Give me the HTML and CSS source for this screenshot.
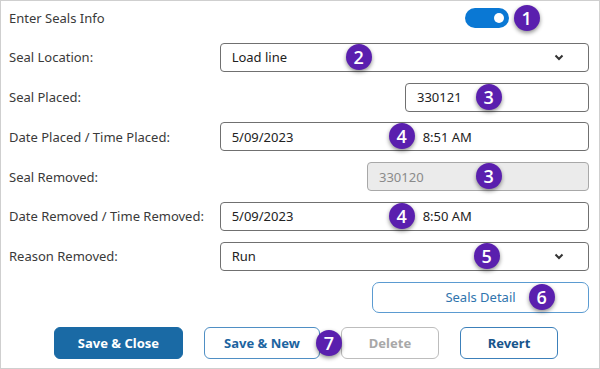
FILE: index.html
```html
<!DOCTYPE html>
<html lang="en">
<head>
  <meta charset="UTF-8">
  <meta name="viewport" content="width=device-width, initial-scale=1.0">
  <title>Enter Seals Info</title>
  <link rel="stylesheet" href="styles.css">
</head>
<body>
<div class="panel">
  <div class="row">
    <span class="label">Enter Seals Info</span>
    <div class="field end toggle-field">
      <div class="toggle"><span class="knob"></span></div>
      <span class="badge b-toggle">1</span>
    </div>
  </div>

  <div class="row">
    <span class="label">Seal Location:</span>
    <div class="field">
      <div class="box select">
        <span>Load line</span>
        <svg class="chev" width="10" height="7" viewBox="0 0 10 7"><polyline points="1.5,1.5 5,5 8.5,1.5" fill="none" stroke="#333" stroke-width="2"/></svg>
      </div>
      <span class="badge b-loc">2</span>
    </div>
  </div>

  <div class="row">
    <span class="label">Seal Placed:</span>
    <div class="field end">
      <div class="box placed">330121</div>
      <span class="badge b-seal">3</span>
    </div>
  </div>

  <div class="row">
    <span class="label">Date Placed / Time Placed:</span>
    <div class="field">
      <div class="box datetime">
        <span class="date">5/09/2023</span>
        <span>8:51 AM</span>
      </div>
      <span class="badge b-date">4</span>
    </div>
  </div>

  <div class="row">
    <span class="label">Seal Removed:</span>
    <div class="field end">
      <div class="box removed">330120</div>
      <span class="badge b-seal">3</span>
    </div>
  </div>

  <div class="row">
    <span class="label">Date Removed / Time Removed:</span>
    <div class="field">
      <div class="box datetime">
        <span class="date">5/09/2023</span>
        <span>8:50 AM</span>
      </div>
      <span class="badge b-date">4</span>
    </div>
  </div>

  <div class="row">
    <span class="label">Reason Removed:</span>
    <div class="field">
      <div class="box select">
        <span>Run</span>
        <svg class="chev" width="10" height="7" viewBox="0 0 10 7"><polyline points="1.5,1.5 5,5 8.5,1.5" fill="none" stroke="#333" stroke-width="2"/></svg>
      </div>
      <span class="badge b-reason">5</span>
    </div>
  </div>

  <div class="row detail-row">
    <span class="label"></span>
    <div class="field end">
      <button class="detail">Seals Detail</button>
      <span class="badge b-detail">6</span>
    </div>
  </div>

  <div class="actions">
    <button class="btn primary">Save &amp; Close</button>
    <button class="btn outline new">Save &amp; New</button>
    <button class="btn disabled">Delete</button>
    <button class="btn outline revert">Revert</button>
    <span class="badge b-new">7</span>
  </div>
</div>
</body>
</html>
```

FILE: styles.css
```css
body {
  margin: 0;
  font-family: "Noto Sans", "Open Sans", sans-serif;
  font-size: 13px;
  color: #333;
  background: #fff;
}
.panel {
  width: 600px;
  height: 369px;
  box-sizing: border-box;
  border: 1px solid #cfcfcf;
  padding: 2px 10px 0 8px;
  display: flex;
  flex-direction: column;
  gap: 10.8px;
  position: relative;
}
.row {
  display: flex;
  align-items: center;
  height: 29px;
}
.label {
  width: 211px;
  color: #3a3a3a;
}
.field {
  width: 370px;
  height: 100%;
  display: flex;
  position: relative;
}
.field.end {
  justify-content: flex-end;
  align-items: center;
}
.box {
  flex: 1;
  box-sizing: border-box;
  height: 29px;
  border: 1px solid #707070;
  border-radius: 4px;
  padding: 0 11px;
  display: flex;
  align-items: center;
  color: #222;
  background: #fff;
}
.select {
  justify-content: space-between;
  padding-right: 24px;
}
.chev {
  display: block;
}
.placed {
  flex: 0 0 184px;
}
.removed {
  flex: 0 0 222px;
  background: #ebebeb;
  border-color: #a8a8a8;
  color: #8a8a8a;
}
.datetime .date {
  width: 191px;
}
.toggle-field {
  padding-right: 80px;
  box-sizing: border-box;
}
.toggle {
  width: 44px;
  height: 20px;
  border-radius: 10px;
  background: #0a78d4;
  position: relative;
}
.knob {
  position: absolute;
  right: 5px;
  top: 5px;
  width: 10px;
  height: 10px;
  border-radius: 50%;
  background: #fff;
}
.detail-row {
  height: 31px;
}
.detail {
  width: 217px;
  height: 31px;
  border: 1px solid #5b9bd1;
  border-radius: 7px;
  background: #fff;
  color: #2f74ad;
  font-family: inherit;
  font-size: 13px;
  padding: 0;
}
.actions {
  display: flex;
  gap: 21px;
  margin-top: 4px;
  padding-left: 45px;
  position: relative;
}
.btn {
  height: 32px;
  border-radius: 6px;
  font-family: inherit;
  font-size: 13px;
  font-weight: bold;
  background: #fff;
  padding: 0;
}
.primary {
  width: 129px;
  background: #1a6aa5;
  border: 1px solid #1a6aa5;
  color: #fff;
}
.outline {
  border: 1px solid #4f8fc4;
  color: #1c64a0;
}
.new {
  width: 116px;
}
.revert {
  width: 98px;
  border-color: #3c80ba;
  color: #17558c;
}
.disabled {
  width: 98px;
  border: 1px solid #bdbdbd;
  color: #a8a8a8;
}
.badge {
  position: absolute;
  width: 26px;
  height: 26px;
  border-radius: 50%;
  background: #5a1fae;
  color: #fff;
  font-family: "Open Sans", sans-serif;
  font-weight: 600;
  font-size: 18px;
  line-height: 26px;
  text-align: center;
  box-shadow: 0 2px 4px rgba(0, 0, 0, 0.45);
  z-index: 2;
}
.b-toggle { left: 294px; top: 2px; }
.b-loc { left: 126px; top: 1px; }
.b-seal { left: 256px; top: 1px; }
.b-date { left: 169px; top: 1px; }
.b-reason { left: 254px; top: 1px; }
.b-detail { left: 309px; top: 2px; }
.b-new { left: 307px; top: 3px; }
```
